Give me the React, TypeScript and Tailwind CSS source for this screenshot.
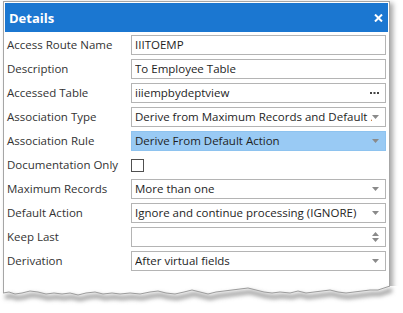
import React from "react";

const Arrow = () => (
  <svg width="7" height="4" viewBox="0 0 7 4" className="shrink-0">
    <path d="M0 0 H7 L3.5 4 Z" fill="#8a8a8a" />
  </svg>
);

const Ellipsis = () => (
  <svg width="9" height="3" viewBox="0 0 9 3" className="shrink-0">
    <rect x="0" y="0" width="2" height="2" fill="#444" />
    <rect x="3.5" y="0" width="2" height="2" fill="#444" />
    <rect x="7" y="0" width="2" height="2" fill="#444" />
  </svg>
);

const Spinner = () => (
  <svg width="7" height="10" viewBox="0 0 7 10" className="shrink-0">
    <path d="M0 4 H7 L3.5 0 Z" fill="#8a8a8a" />
    <path d="M0 6 H7 L3.5 10 Z" fill="#8a8a8a" />
  </svg>
);

type RowProps = {
  label: string;
  value?: string;
  kind?: "text" | "select" | "ellipsis" | "spin" | "check";
  active?: boolean;
};

const Row = ({ label, value = "", kind = "text", active = false }: RowProps) => (
  <div className="flex h-6 items-center">
    <div className="w-[126px] shrink-0 pl-[2px] text-[#333] whitespace-nowrap">{label}</div>
    {kind === "check" ? (
      <div className="flex h-5 items-center">
        <div className="h-[13px] w-[13px] border border-[#505050] bg-white" />
      </div>
    ) : (
      <div
        className={`flex h-5 w-[255px] items-center border pl-[3px] pr-[6px] ${
          active ? "border-[#8ec3ef] bg-[#99caf4]" : "border-[#b4b4b4] bg-white"
        }`}
      >
        <div className="min-w-0 flex-1 overflow-hidden whitespace-nowrap text-[#1e1e1e]">{value}</div>
        {kind === "select" && <Arrow />}
        {kind === "ellipsis" && <Ellipsis />}
        {kind === "spin" && <Spinner />}
      </div>
    )}
  </div>
);

export default function App() {
  const pts: [number, number][] = [
    [3, 293], [9, 292], [15, 294], [22, 293], [30, 291], [38, 292], [46, 294], [54, 293],
    [62, 294], [70, 293], [78, 295], [86, 293], [95, 292], [103, 294], [112, 293], [120, 294],
    [130, 293], [140, 294], [150, 292], [158, 291], [166, 293], [175, 294], [184, 292], [192, 290],
    [200, 292], [208, 294], [216, 292], [224, 291], [232, 290], [240, 289], [248, 288], [256, 290],
    [264, 292], [272, 293], [280, 292], [290, 293], [298, 291], [306, 293], [314, 292], [322, 291],
    [330, 290], [338, 292], [346, 293], [354, 292], [362, 291], [370, 290], [378, 290], [384, 288],
    [390, 286],
  ];
  const line = pts.map((p, i) => `${i === 0 ? "M" : "L"}${p[0]} ${p[1]}`).join(" ");
  const fillPath = `M0 ${pts[0][1]} ${line.replace(/^M/, "L")} L403 ${pts[pts.length - 1][1]} L403 313 L0 313 Z`;

  return (
    <div
      className="relative h-[313px] w-[403px] overflow-hidden bg-white text-[11.5px] leading-[16px]"
      style={{ fontFamily: '"Open Sans", "Noto Sans", sans-serif' }}
    >
      <div className="ml-[3px] mt-[1px] h-[305px] w-[387px] border border-[#a6a6a6] bg-white p-px shadow-[3px_2px_5px_rgba(0,0,0,0.35)]">
        <div className="flex h-[29px] items-center justify-between bg-[#1b77d1] pl-[4px] pr-[5px]">
          <span className="text-[13px] font-bold leading-[18px] text-white">Details</span>
          <svg width="9" height="8" viewBox="0 0 9 8">
            <path d="M1 0.5 L8 7.5 M8 0.5 L1 7.5" stroke="white" strokeWidth="2" />
          </svg>
        </div>
        <div className="flex flex-col pt-px">
          <Row label="Access Route Name" value="IIITOEMP" />
          <Row label="Description" value="To Employee Table" />
          <Row label="Accessed Table" value="iiiempbydeptview" kind="ellipsis" />
          <Row label="Association Type" value="Derive from Maximum Records and Default ." kind="select" />
          <Row label="Association Rule" value="Derive From Default Action" kind="select" active />
          <Row label="Documentation Only" kind="check" />
          <Row label="Maximum Records" value="More than one" kind="select" />
          <Row label="Default Action" value="Ignore and continue processing (IGNORE)" kind="select" />
          <Row label="Keep Last" kind="spin" />
          <Row label="Derivation" value="After virtual fields" kind="select" />
        </div>
      </div>
      <svg className="absolute left-0 top-0" width="403" height="313" viewBox="0 0 403 313">
        <defs>
          <filter id="blur" x="-10%" y="-200%" width="120%" height="500%">
            <feGaussianBlur stdDeviation="2" />
          </filter>
        </defs>
        <path d={fillPath} fill="white" />
        <path d={line} transform="translate(2 4)" stroke="#9a9a9a" strokeWidth="4" fill="none" filter="url(#blur)" />
        <path d={line} stroke="#9c9c9c" strokeWidth="1" fill="none" />
      </svg>
    </div>
  );
}
